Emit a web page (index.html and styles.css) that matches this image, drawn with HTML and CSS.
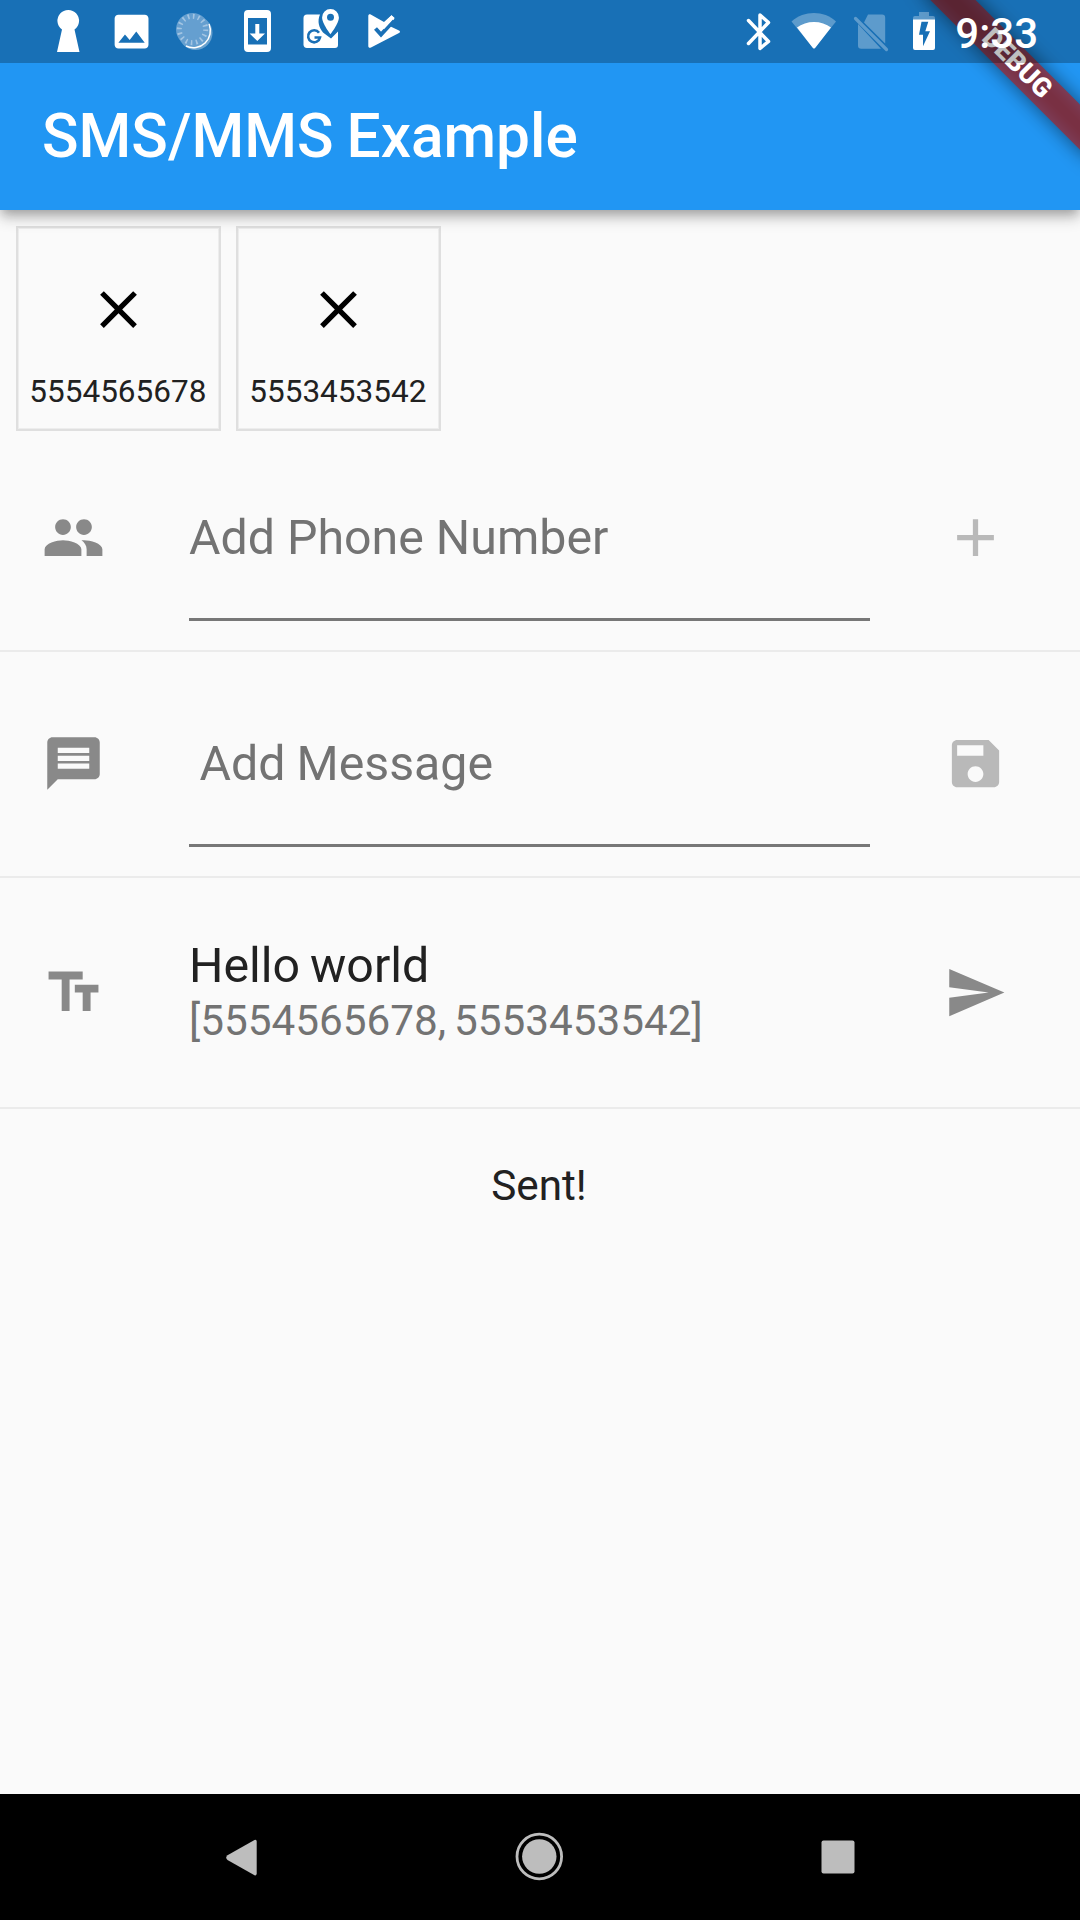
FILE: index.html
```
<!DOCTYPE html>
<html lang="en">
<head>
<meta charset="utf-8">
<title>SMS/MMS Example</title>
<link rel="stylesheet" href="styles.css">
</head>
<body>
<div class="screen">
  <header class="header">
    <div class="status">
      <svg class="status-icons" width="400" height="63" viewBox="0 0 400 63" fill="#fff">
        <path d="M57 52l5-22.500a10.800 10.800 0 1 1 12.500 0L79.500 52z"/>
        <path transform="translate(109 9) scale(1.880)" d="M21 19V5c0-1.100-.9-2-2-2H5c-1.100 0-2 .9-2 2v14c0 1.100.9 2 2 2h14c1.100 0 2-.9 2-2zM8.500 13.500l2.500 3.010L14.500 12l4.500 6H5l3.500-4.500z"/>
        <circle cx="195.500" cy="33" r="17" opacity=".35"/>
        <path d="M209 24a17 17 0 0 1-23 22a17 17 0 0 0 23-22z" stroke="#fff" stroke-width="1.500"/>
        <circle cx="192.500" cy="29.500" r="16.500" fill="#659fd0"/>
        <circle cx="192.500" cy="29.500" r="13.200" fill="none" stroke="#a3c5e3" stroke-width="5" stroke-dasharray="1.600 3.584"/>
        <path fill-rule="evenodd" d="M248 10h19a4 4 0 0 1 4 4v34a4 4 0 0 1-4 4h-19a4 4 0 0 1-4-4V14a4 4 0 0 1 4-4zM248 18v26.500h19V18zM255.300 24h4v9.500h5.700L257.300 41l-7.700-7.500h5.700z"/>
        <path d="M307 14.500h13c-3 7-1 13 3 18l8 6 7-7V45a3 3 0 0 1-3 3h-28a3.500 3.500 0 0 1-3.500-3V18a3.500 3.500 0 0 1 3.500-3.500z"/>
        <path d="M319 32.800a6 6 0 1 0 1 4.700H314.500" fill="none" stroke="#1a70b6" stroke-width="2.600"/>
        <path d="M330.500 9a8.400 8.400 0 0 1 8.400 8.400c0 6-8.400 16.800-8.400 16.800s-8.400-10.800-8.400-16.800a8.400 8.400 0 0 1 8.400-8.400z"/>
        <circle cx="330.500" cy="17.300" r="3.500" fill="#1a70b6"/>
        <path d="M368.300 16c0-1.500 1.200-2 2.400-1.400L384 22l7.500-6.800 3 3.200-5 7.600 9.500 4.600c1.300.7 1.300 1.700 0 2.400l-28 14.500c-1.600.8-2.700 0-2.700-1.500z"/>
        <path d="M375.500 28.500l5.500 6L394 20.500" fill="none" stroke="#1a70b6" stroke-width="4"/>
        <path d="M382.500 28L393 16.500" fill="none" stroke="#fff" stroke-width="4"/>
      </svg>
      <div class="status-right">
        <svg width="210" height="63" viewBox="740 0 210 63" fill="#fff">
          <path d="M748.500 20.500L768.500 41.500 760 48.500V15L768.500 22.500 748.500 43.500" fill="none" stroke="#fff" stroke-width="3.500" stroke-linejoin="round" stroke-linecap="round"/>
          <path d="M791.500 21.500C804 10.300 824 10.300 836 21.500L814 49z" opacity=".3"/>
          <path d="M797 27.500C806 20 822 20 831 27.500L815.500 47.500q-1.500 2-3 0z"/>
          <path d="M868 14.500h14a3.200 3.200 0 0 1 3.200 3.200V43.500L864 22.500zM858 24v21.500a3.200 3.200 0 0 0 3.200 3.200H881z" opacity=".3"/>
          <path d="M855.500 18.500L886.500 49.500" stroke="#fff" stroke-width="3.200" stroke-linecap="round" opacity=".3"/>
          <path d="M919 12h10v4h4a2 2 0 0 1 2 2v2h-22v-2a2 2 0 0 1 2-2h4z" opacity=".3"/>
          <path fill-rule="evenodd" d="M913 19.500h22V48a2 2 0 0 1-2 2h-18a2 2 0 0 1-2-2zM921.500 21.700l-2.500 13h4v11.500l7-15h-4.700l3-9.500z"/>
        </svg>
        <span class="clock">9:33</span>
      </div>
    </div>
    <h1 class="title">SMS/MMS Example</h1>
    <div class="banner-corner">
      <div class="banner-shadow"></div>
      <div class="banner">DEBUG</div>
    </div>
  </header>

  <main class="content">
    <div class="people">
      <div class="person">
        <svg class="icon" viewBox="0 0 24 24"><path d="M19 6.410L17.590 5 12 10.590 6.410 5 5 6.410 10.590 12 5 17.590 6.410 19 12 13.410 17.590 19 19 17.590 13.410 12z"/></svg>
        <span class="person-number">5554565678</span>
      </div>
      <div class="person">
        <svg class="icon" viewBox="0 0 24 24"><path d="M19 6.410L17.590 5 12 10.590 6.410 5 5 6.410 10.590 12 5 17.590 6.410 19 12 13.410 17.590 19 19 17.590 13.410 12z"/></svg>
        <span class="person-number">5553453542</span>
      </div>
    </div>

    <div class="row recipient-row">
      <svg class="icon lead" viewBox="0 0 24 24"><path d="M16 11c1.660 0 2.990-1.340 2.990-3S17.660 5 16 5c-1.660 0-3 1.340-3 3s1.340 3 3 3zm-8 0c1.660 0 2.990-1.340 2.990-3S9.660 5 8 5C6.340 5 5 6.340 5 8s1.340 3 3 3zm0 2c-2.330 0-7 1.170-7 3.500V19h14v-2.500c0-2.330-4.670-3.500-7-3.500zm8 0c-.29 0-.62.020-.97.050 1.160.84 1.970 1.970 1.970 3.450V19h6v-2.500c0-2.330-4.670-3.500-7-3.500z"/></svg>
      <div class="field">Add Phone Number</div>
      <svg class="icon disabled" viewBox="0 0 24 24"><path d="M19 13h-6v6h-2v-6H5v-2h6V5h2v6h6v2z"/></svg>
    </div>

    <div class="row message-row">
      <svg class="icon lead" viewBox="0 0 24 24"><path d="M20 2H4c-1.100 0-1.990.9-1.990 2L2 22l4-4h14c1.100 0 2-.9 2-2V4c0-1.100-.9-2-2-2zm-2 12H6v-2h12v2zm0-3H6V9h12v2zm0-3H6V6h12v2z"/></svg>
      <div class="field message">Add Message</div>
      <svg class="icon disabled" viewBox="0 0 24 24"><path d="M17 3H5c-1.110 0-2 .9-2 2v14c0 1.100.89 2 2 2h14c1.100 0 2-.9 2-2V7l-4-4zm-5 16c-1.660 0-3-1.340-3-3s1.340-3 3-3 3 1.340 3 3-1.340 3-3 3zm3-10H5V5h10v4z"/></svg>
    </div>

    <div class="row summary">
      <svg class="icon lead" viewBox="0 0 24 24"><path d="M2.500 4v3h5v12h3V7h5V4h-13zm19 5h-9v3h3v7h3v-7h3V9z"/></svg>
      <div class="summary-text">
        <div class="summary-body">Hello world</div>
        <div class="summary-to">[5554565678, 5553453542]</div>
      </div>
      <svg class="icon" viewBox="0 0 24 24"><path d="M2.010 21L23 12 2.010 3 2 10l15 2-15 2z"/></svg>
    </div>

    <p class="result">Sent!</p>
  </main>

  <nav class="nav">
    <svg width="64" height="64" viewBox="0 0 64 64"><path d="M18.500 30.200L45.500 15q2.200-.8 2.200 1.600v32q0 2.400-2.200 1.600L18.500 35q-2.600-2.400 0-4.800z"/></svg>
    <svg width="64" height="64" viewBox="0 0 64 64"><circle cx="32.300" cy="31.500" r="17.200"/><circle cx="32.300" cy="31.500" r="22.300" fill="none" stroke="#bdbdbd" stroke-width="2.800"/></svg>
    <svg width="64" height="64" viewBox="0 0 64 64"><rect x="15.500" y="15.500" width="33" height="33" rx="2"/></svg>
  </nav>
</div>
</body>
</html>
```
FILE: styles.css
```
* {
  box-sizing: border-box;
}

body {
  margin: 0;
  background: #fafafa;
  font-family: Roboto, sans-serif;
  color: #212121;
}

.screen {
  display: flex;
  flex-direction: column;
  width: 1080px;
  height: 1920px;
  overflow: hidden;
}

/* App bar */
.header {
  position: relative;
  z-index: 1;
  height: 210px;
  background: #2196f3;
  color: #fff;
  box-shadow:
    0 5px 10px -3px rgba(0, 0, 0, .2),
    0 10px 13px rgba(0, 0, 0, .14),
    0 3px 13px rgba(0, 0, 0, .12);
}

.status {
  position: relative;
  z-index: 2;
  display: flex;
  justify-content: space-between;
  height: 63px;
  padding-right: 42px;
  background: rgba(0, 0, 0, .25);
}

.status-right {
  display: flex;
  align-items: center;
  gap: 5px;
}

.clock {
  font-size: 42px;
  font-weight: 500;
  line-height: 63px;
  padding-top: 3px;
}

.title {
  margin: 0;
  padding-left: 42px;
  font-size: 60.375px;
  font-weight: 500;
  line-height: 147px;
  word-spacing: -2px;
}

.banner-corner {
  position: absolute;
  inset: 0;
  z-index: 1;
  overflow: hidden;
}

.banner,
.banner-shadow {
  position: absolute;
  top: 73.5px;
  right: -120px;
  width: 240px;
  height: 31.5px;
  transform: rotate(45deg);
  transform-origin: 120px -73.5px;
}

.banner {
  background: rgba(183, 28, 28, .627);
  font-size: 26.8px;
  font-weight: 900;
  line-height: 31.5px;
  text-align: center;
}

.banner-shadow {
  background: rgba(0, 0, 0, .5);
  filter: blur(9.6px);
}

/* Content */
.content {
  flex: 1;
}

.icon {
  flex: none;
  width: 63px;
  height: 63px;
  fill: currentColor;
}

.people {
  display: flex;
  gap: 15.3px;
  height: 215px;
  padding: 16px;
}

.person {
  display: flex;
  flex-direction: column;
  align-items: center;
  gap: 33px;
  width: 204.7px;
  height: 204.7px;
  padding-top: 50px;
  border: 2px solid #dfdfdf;
  box-shadow: inset 0 0 0 1px #ededed;
  color: #000;
}

.person-number {
  padding-right: 1px;
  color: #212121;
  font-size: 31.5px;
  line-height: 36px;
}

.row {
  display: flex;
  align-items: center;
  height: 226px;
  padding: 0 73.5px 0 42px;
  border-bottom: 2px solid #ebebeb;
  color: #898989;
}

.recipient-row {
  height: 227px;
}

.message-row {
  padding-bottom: 1px;
}

.lead {
  margin-right: 84px;
}

.disabled {
  color: #b9b9b9;
}

.field {
  width: 681px;
  height: 167px;
  margin-right: 73.5px;
  border-bottom: 3px solid #777;
  color: #737373;
  font-size: 48.3px;
  line-height: 168px;
}

.message {
  padding-left: 10.5px;
  word-spacing: -1px;
}

.summary {
  height: 231px;
}

.summary-text {
  width: 681px;
  margin-right: 73.5px;
}

.summary-body {
  padding-bottom: 3px;
  color: #212121;
  font-size: 48.3px;
  line-height: 54px;
  word-spacing: -2px;
}

.summary-to {
  color: #737373;
  font-size: 42.26px;
  line-height: 50px;
  word-spacing: -2.5px;
}

.result {
  margin: 0;
  padding: 52px 2px 0 0;
  font-size: 42.26px;
  line-height: 50px;
  text-align: center;
}

/* System navigation */
.nav {
  display: flex;
  justify-content: center;
  align-items: center;
  gap: 234.5px;
  height: 126px;
  padding-right: 1.5px;
  background: #000;
  fill: #bdbdbd;
}
```
